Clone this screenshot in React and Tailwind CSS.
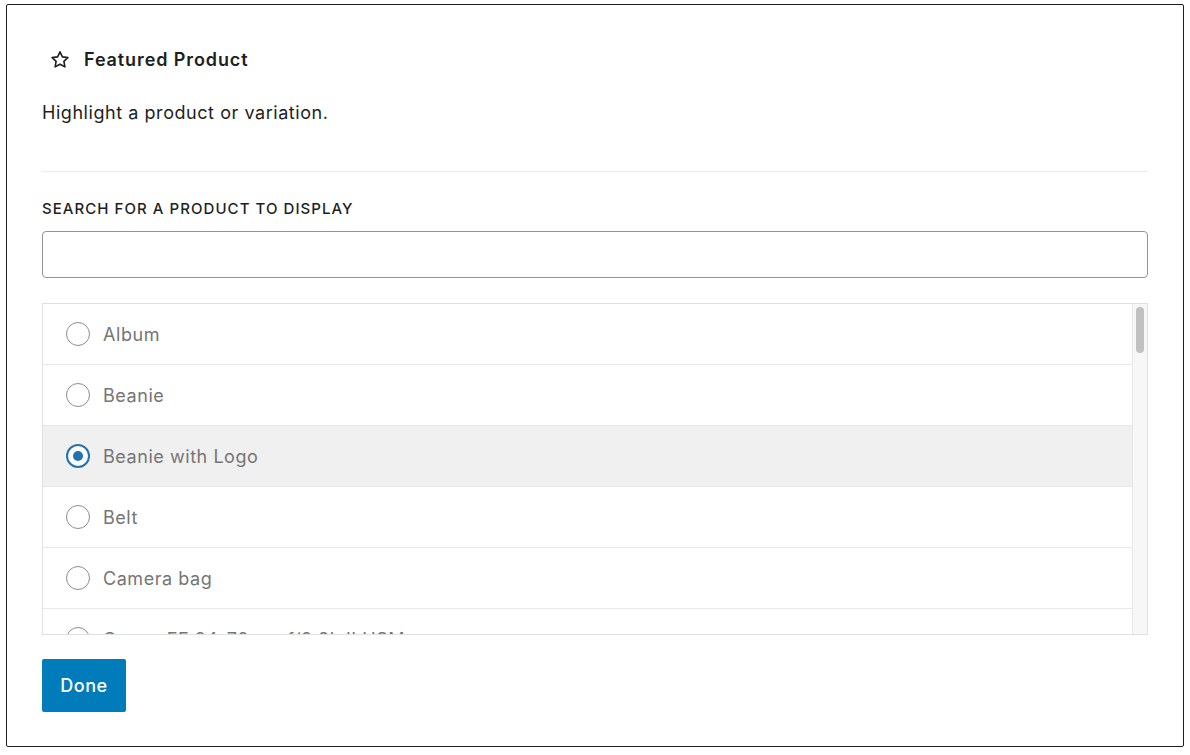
import React from "react";

const items = [
  { name: "Album" },
  { name: "Beanie" },
  { name: "Beanie with Logo", selected: true },
  { name: "Belt" },
  { name: "Camera bag" },
  { name: "Canon EF 24-70mm f/2.8L II USM" },
];

function Radio({ selected }) {
  if (selected) {
    return (
      <span className="flex h-[24px] w-[24px] shrink-0 items-center justify-center rounded-full border-2 border-[#2271b1] bg-white">
        <span className="h-[10px] w-[10px] rounded-full bg-[#2271b1]" />
      </span>
    );
  }
  return <span className="block h-[24px] w-[24px] shrink-0 rounded-full border border-[#8c8c8c] bg-white" />;
}

export default function App() {
  return (
    <div className="min-h-[755px] bg-white pl-[6px] pt-[4px]" style={{ fontFamily: "Inter, 'Noto Sans', sans-serif" }}>
      <div className="flex h-[743px] w-[1178px] flex-col rounded-[2px] border border-[#1e1e1e] px-[35px] pt-[40px]">
        <div className="flex items-center gap-[12px] pl-[6px]">
          <svg width="24" height="24" viewBox="0 0 24 24" className="shrink-0">
            <path
              d="M12 3.8l2.4 5.1 5.5.7-4 3.8 1 5.5L12 16.2l-4.9 2.7 1-5.5-4-3.8 5.5-.7z"
              fill="none"
              stroke="#1e1e1e"
              strokeWidth="1.6"
              strokeLinejoin="round"
            />
          </svg>
          <span className="text-[18px] font-semibold leading-[30px] tracking-[0.9px] text-[#1e1e1e]">Featured Product</span>
        </div>
        <p className="mt-[25px] text-[18px] leading-[26px] tracking-[0.55px] text-[#1e1e1e]">Highlight a product or variation.</p>
        <div className="mt-[45px] h-px bg-[#ececec]" />
        <div className="mt-[28px] text-[15px] font-medium uppercase leading-[18px] tracking-[1.05px] text-[#1e1e1e]">
          Search for a product to display
        </div>
        <input
          type="text"
          className="mt-[13px] h-[47px] w-full rounded-[4px] border border-[#949494] bg-white px-[12px] text-[16px] outline-none"
        />
        <div className="mt-[25px] flex h-[332px] overflow-hidden border border-[#e0e0e0]">
          <div className="flex-1 overflow-hidden">
            {items.map((it) => (
              <div
                key={it.name}
                className={`flex h-[61px] shrink-0 items-center gap-[13px] border-b border-[#e8e8e8] pl-[23px] ${
                  it.selected ? "bg-[#f0f0f0]" : "bg-white"
                }`}
              >
                <Radio selected={it.selected} />
                <span className="text-[18px] tracking-[0.55px] text-[#757575]">{it.name}</span>
              </div>
            ))}
          </div>
          <div className="w-[15px] shrink-0 border-l border-[#e8e8e8] bg-[#f7f7f7] px-[3px] pt-[3px]">
            <div className="h-[46px] rounded-full bg-[#c1c1c1]" />
          </div>
        </div>
        <div className="mt-[24px]">
          <button className="h-[53px] w-[84px] rounded-[2px] bg-[#007cba] text-[18px] font-medium tracking-[0.5px] text-white">Done</button>
        </div>
      </div>
    </div>
  );
}
